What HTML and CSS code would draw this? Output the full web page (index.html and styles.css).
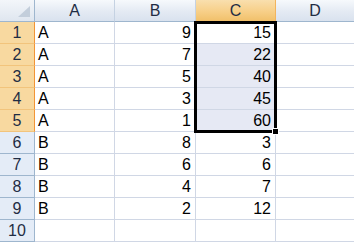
FILE: index.html
```html
<!DOCTYPE html>
<html>
<head>
<meta charset="utf-8">
<link rel="stylesheet" href="styles.css">
</head>
<body>
<div class="sheet">
  <div class="grid">
    <div class="corner"><svg class="tri" width="14" height="12" viewBox="0 0 14 12"><polygon points="13,0 13,11 1,11" fill="#c3cedb"/></svg></div>
    <div class="ch">A</div>
    <div class="ch">B</div>
    <div class="ch ch-sel">C</div>
    <div class="ch ch-last">D</div>

    <div class="rh rh-sel">1</div><div class="c">A</div><div class="c n">9</div><div class="c n">15</div><div class="c last"></div>
    <div class="rh rh-sel">2</div><div class="c">A</div><div class="c n">7</div><div class="c n hl">22</div><div class="c last"></div>
    <div class="rh rh-sel">3</div><div class="c">A</div><div class="c n">5</div><div class="c n hl">40</div><div class="c last"></div>
    <div class="rh rh-sel">4</div><div class="c">A</div><div class="c n">3</div><div class="c n hl">45</div><div class="c last"></div>
    <div class="rh rh-sel">5</div><div class="c">A</div><div class="c n">1</div><div class="c n hl">60</div><div class="c last"></div>
    <div class="rh">6</div><div class="c">B</div><div class="c n">8</div><div class="c n">3</div><div class="c last"></div>
    <div class="rh">7</div><div class="c">B</div><div class="c n">6</div><div class="c n">6</div><div class="c last"></div>
    <div class="rh">8</div><div class="c">B</div><div class="c n">4</div><div class="c n">7</div><div class="c last"></div>
    <div class="rh">9</div><div class="c">B</div><div class="c n">2</div><div class="c n">12</div><div class="c last"></div>
    <div class="rh">10</div><div class="c"></div><div class="c n"></div><div class="c n"></div><div class="c last"></div>
  </div>
  <div class="sel"><div class="handle"></div></div>
</div>
</body>
</html>
```

FILE: styles.css
```css
html, body {
  margin: 0;
  padding: 0;
  background: #ffffff;
  overflow: hidden;
}
.sheet {
  position: relative;
  width: 354px;
  height: 242px;
  font-family: "Liberation Sans", Arial, sans-serif;
  font-size: 16px;
  color: #000;
}
.grid {
  display: grid;
  grid-template-columns: 35px 80px 81px 80px 1fr;
  grid-auto-rows: 22px;
}
.grid > div {
  box-sizing: border-box;
  border-right: 1px solid #d0d7e5;
  border-bottom: 1px solid #d0d7e5;
  display: flex;
  align-items: flex-end;
  padding-bottom: 2px;
  line-height: 17px;
}
.grid > .corner {
  background: linear-gradient(#f3f6fa, #dfe6ef);
  border-right: 1px solid #9eb6ce;
  border-bottom: 1px solid #9eb6ce;
  position: relative;
}
.tri {
  position: absolute;
  right: 3px;
  bottom: 3px;
}
.grid > .ch {
  background: linear-gradient(#f6f9fc 0%, #e4eaf3 55%, #d9e2ee 100%);
  border-right: 1px solid #c5d2e2;
  border-bottom: 1px solid #9eb6ce;
  justify-content: center;
  color: #1f2d44;
}
.grid > .ch-sel {
  background: linear-gradient(#f9dfae 0%, #f7cf88 55%, #f1c06a 100%);
  border-bottom: 1px solid #f29536;
  border-right: 1px solid #f2b45d;
}
.grid > .ch-last {
  border-right: none;
}
.grid > .rh {
  background: #e4ecf7;
  border-right: 1px solid #9eb6ce;
  border-bottom: 1px solid #9eb6ce;
  justify-content: center;
  color: #1f2d44;
}
.grid > .rh-sel {
  background: #f8d9a0;
  border-bottom: 1px solid #f2c47c;
  border-right: 1px solid #f29536;
}
.c {
  padding-left: 3px;
}
.grid > .n {
  justify-content: flex-end;
  padding-right: 4px;
}
.grid > .hl {
  background: #e6e9f4;
}
.grid > .last {
  border-right: none;
}
.sel {
  position: absolute;
  left: 194px;
  top: 21px;
  width: 83px;
  height: 112px;
  box-sizing: border-box;
  border: 3px solid #000;
}
.handle {
  position: absolute;
  right: -5px;
  bottom: -5px;
  width: 5px;
  height: 5px;
  background: #000;
  border: 1px solid #fff;
}
```
